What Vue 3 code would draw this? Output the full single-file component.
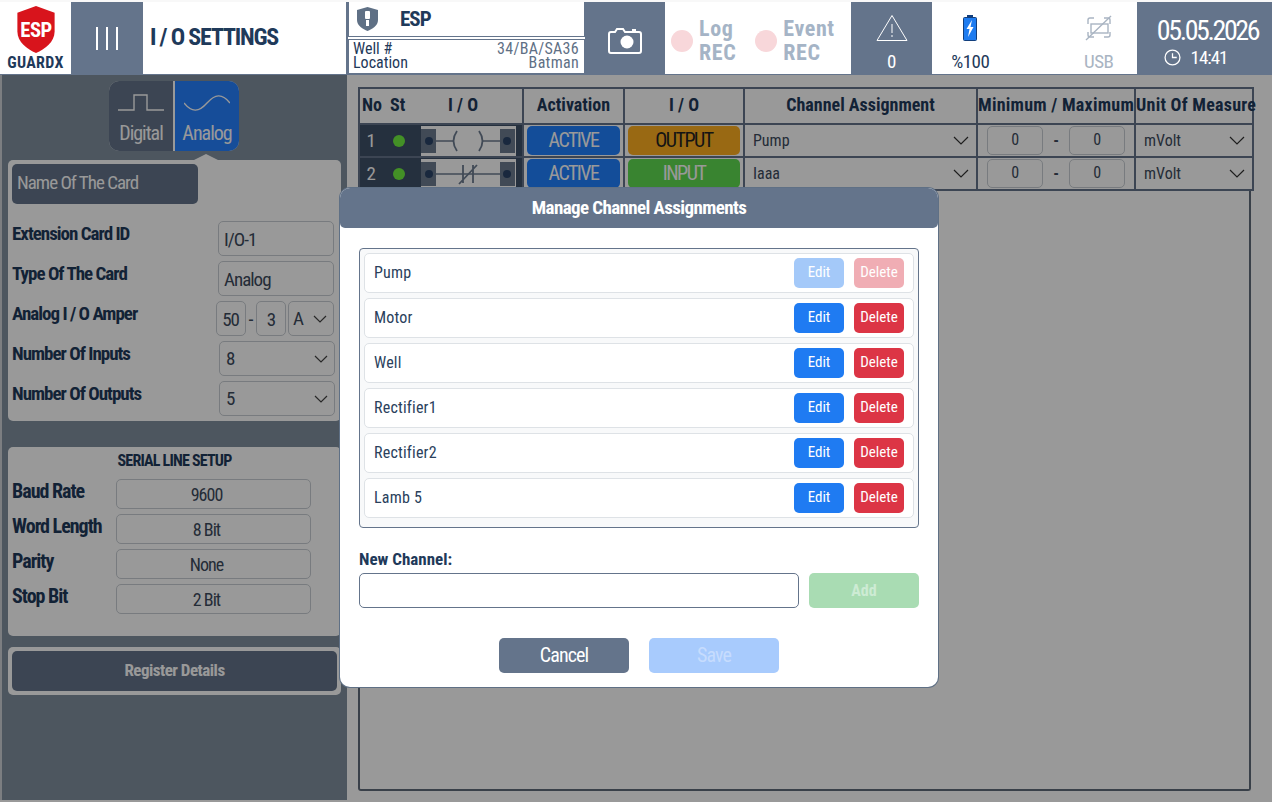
<script setup>
import { ref } from 'vue';

const channels = ref([
  { name: 'Pump', locked: true },
  { name: 'Motor', locked: false },
  { name: 'Well', locked: false },
  { name: 'Rectifier1', locked: false },
  { name: 'Rectifier2', locked: false },
  { name: 'Lamb 5', locked: false },
]);

const rows = [
  { no: 1, dir: 'OUTPUT', channel: 'Pump', coil: true },
  { no: 2, dir: 'INPUT', channel: 'Iaaa', coil: false },
];

const serial = [
  { label: 'Baud Rate', value: '9600' },
  { label: 'Word Length', value: '8 Bit' },
  { label: 'Parity', value: 'None' },
  { label: 'Stop Bit', value: '2 Bit' },
];
</script>

<template>
  <div class="page">
    <header class="top">
      <div class="brand">
        <div class="logo">
          <svg width="40" height="49" viewBox="0 0 40 50">
            <path d="M20 1 L39 8 V27 C39 38 29 45 20 49 C11 45 1 38 1 27 V8 Z" fill="#d8141c" />
            <text x="20" y="33" text-anchor="middle" class="logo-text">ESP</text>
          </svg>
          <span>GUARDX</span>
        </div>
        <div class="menu"><i></i><i></i><i></i></div>
        <h1>I / O SETTINGS</h1>
      </div>

      <div class="well">
        <div class="well-name">
          <svg width="23" height="26" viewBox="0 0 23 26">
            <path d="M11.5 1 L22 4 V14 C22 20 16 23 11.5 25 C7 23 1 20 1 14 V4 Z" fill="#5f7085" />
            <rect x="9" y="5" width="5" height="8" rx="1" fill="#fff" />
            <rect x="10" y="14" width="3" height="6" fill="#fff" />
          </svg>
          <b>ESP</b>
        </div>
        <div class="well-info">
          <div><span>Well #</span><span class="soft">34/BA/SA36</span></div>
          <div><span>Location</span><span class="soft">Batman</span></div>
        </div>
      </div>

      <div class="cam">
        <svg width="34" height="30" viewBox="0 0 34 30">
          <path d="M3 7 H7 L9 4 H15 L17 7 H25 V5 H27 V7 H31 Q33 7 33 9 V26 Q33 28 31 28 H3 Q1 28 1 26 V9 Q1 7 3 7 Z" fill="none" stroke="#fff" stroke-width="2" />
          <circle cx="19" cy="17" r="6.5" fill="#fff" />
        </svg>
      </div>

      <div class="rec">
        <div class="rec-item"><i></i><span>Log<br />REC</span></div>
        <div class="rec-item"><i></i><span>Event<br />REC</span></div>
      </div>

      <div class="warn">
        <svg width="32" height="28" viewBox="0 0 32 28">
          <path d="M16 1.5 L31 26.5 H1 Z" fill="none" stroke="#fff" stroke-width="1" />
          <path d="M16 10 V19 M16 21 V23" stroke="#fff" stroke-width="1" />
        </svg>
        <span>0</span>
      </div>

      <div class="status">
        <div class="stat">
          <svg width="16" height="28" viewBox="0 0 16 28">
            <rect x="5" y="1" width="6" height="3" fill="#123f7c" />
            <rect x="1.5" y="3.5" width="13" height="23" rx="1" fill="#1e7cf0" stroke="#123f7c" />
            <path d="M10 6 L4.5 15 H7.5 L6 23 L11.5 13 H8.5 Z" fill="#fff" />
          </svg>
          <span>%100</span>
        </div>
        <div class="stat off">
          <svg width="28" height="28" viewBox="0 0 28 28" fill="none" stroke="#a9b4c2" stroke-width="1.4">
            <path d="M3 10 V6 Q3 4 5 4 H9 M19 4 H23 Q25 4 25 6 V10 M3 18 V21 Q3 23 5 23 H9 M19 23 H23 Q25 23 25 21 V18" />
            <rect x="6" y="10" width="17" height="9" />
            <path d="M1 26 L26 2" />
          </svg>
          <span>USB</span>
        </div>
      </div>

      <div class="clock">
        <b>05.05.2026</b>
        <div>
          <svg width="17" height="17" viewBox="0 0 16 16" fill="none" stroke="#fff" stroke-width="1.2">
            <circle cx="8" cy="8" r="7" />
            <path d="M8 4 V8 H12" />
          </svg>
          <span>14:41</span>
        </div>
      </div>
    </header>

    <main class="body">
      <aside class="side">
        <div class="toggle">
          <div class="tab">
            <svg width="46" height="18" viewBox="0 0 46 18" fill="none" stroke="#fff" stroke-width="1.4">
              <path d="M0 16 H16 V1 H29 V16 H46" />
            </svg>
            <span>Digital</span>
          </div>
          <div class="tab on">
            <svg width="46" height="18" viewBox="0 0 46 18" fill="none" stroke="#fff" stroke-width="1.4">
              <path d="M0 9 C8 19 15 18 23 9 S38 -1 46 9" />
            </svg>
            <span>Analog</span>
          </div>
        </div>
        <div class="notch"></div>

        <section class="card first">
          <div class="card-name">Name Of The Card</div>
          <div class="field">
            <label>Extension Card ID</label>
            <div class="box wide gap-r">I/O-1</div>
          </div>
          <div class="field">
            <label>Type Of The Card</label>
            <div class="box wide gap-r">Analog</div>
          </div>
          <div class="field">
            <label>Analog I / O Amper</label>
            <div class="amper">
              <div class="box mid">50</div>
              <span>-</span>
              <div class="box mid">3</div>
              <div class="box sel small">A<svg width="14" height="8" viewBox="0 0 14 8"><path d="M1 1 L7 7 L13 1" fill="none" stroke="#444" stroke-width="1.2" /></svg></div>
            </div>
          </div>
          <div class="field">
            <label>Number Of Inputs</label>
            <div class="box sel wide">8<svg width="14" height="8" viewBox="0 0 14 8"><path d="M1 1 L7 7 L13 1" fill="none" stroke="#444" stroke-width="1.2" /></svg></div>
          </div>
          <div class="field">
            <label>Number Of Outputs</label>
            <div class="box sel wide">5<svg width="14" height="8" viewBox="0 0 14 8"><path d="M1 1 L7 7 L13 1" fill="none" stroke="#444" stroke-width="1.2" /></svg></div>
          </div>
        </section>

        <section class="card second">
          <h3>SERIAL LINE SETUP</h3>
          <div v-for="s in serial" :key="s.label" class="serial-row">
            <label>{{ s.label }}</label>
            <div class="box center">{{ s.value }}</div>
          </div>
        </section>

        <div class="reg-wrap"><button class="reg">Register Details</button></div>
      </aside>

      <section class="content">
        <div class="panel">
          <table class="grid">
            <colgroup>
              <col style="width: 164px" />
              <col style="width: 101px" />
              <col style="width: 120px" />
              <col style="width: 233px" />
              <col style="width: 158px" />
              <col style="width: 118px" />
            </colgroup>
            <thead>
              <tr>
                <th class="lead"><span class="n">No</span><span class="s">St</span><span class="io">I / O</span></th>
                <th>Activation</th>
                <th>I / O</th>
                <th>Channel Assignment</th>
                <th class="tight">Minimum / Maximum</th>
                <th class="tight">Unit Of Measure</th>
              </tr>
            </thead>
            <tbody>
              <tr v-for="r in rows" :key="r.no">
                <td class="lead-cell">
                  <div class="lead-row">
                    <span class="num">{{ r.no }}</span>
                    <span class="led"></span>
                    <div class="contact">
                      <svg width="94" height="30" viewBox="0 0 94 30">
                        <rect x="0" y="3" width="15" height="24" fill="#6d7c90" />
                        <rect x="79" y="3" width="15" height="24" fill="#6d7c90" />
                        <circle cx="8" cy="15" r="4" fill="#2a4468" />
                        <circle cx="86" cy="15" r="4" fill="#2a4468" />
                        <template v-if="r.coil">
                          <path d="M12 15 H32 M62 15 H82" stroke="#6d7c90" stroke-width="1.6" />
                          <path d="M36 5 Q29 15 36 25 M58 5 Q65 15 58 25" fill="none" stroke="#6d7c90" stroke-width="1.8" />
                        </template>
                        <template v-else>
                          <path d="M12 15 H82" stroke="#6d7c90" stroke-width="1.6" />
                          <path d="M42 6 V24 M52 6 V24 M38 25 L56 6" fill="none" stroke="#6d7c90" stroke-width="1.8" />
                        </template>
                      </svg>
                    </div>
                  </div>
                </td>
                <td><div class="pill blue">ACTIVE</div></td>
                <td><div class="pill" :class="r.dir === 'OUTPUT' ? 'amber' : 'green'">{{ r.dir }}</div></td>
                <td>
                  <div class="sel-cell">{{ r.channel }}<svg width="16" height="9" viewBox="0 0 16 9"><path d="M1 1 L8 8 L15 1" fill="none" stroke="#333" stroke-width="1.2" /></svg></div>
                </td>
                <td>
                  <div class="minmax"><div class="mm">0</div><span>-</span><div class="mm">0</div></div>
                </td>
                <td>
                  <div class="sel-cell">mVolt<svg width="16" height="9" viewBox="0 0 16 9"><path d="M1 1 L8 8 L15 1" fill="none" stroke="#333" stroke-width="1.2" /></svg></div>
                </td>
              </tr>
            </tbody>
          </table>
        </div>
      </section>

      <div class="overlay">
        <div class="modal">
          <div class="modal-head">Manage Channel Assignments</div>
          <div class="modal-body">
            <div class="list">
              <div v-for="c in channels" :key="c.name" class="item">
                <span>{{ c.name }}</span>
                <div class="item-btns" :class="{ locked: c.locked }">
                  <button class="btn edit">Edit</button>
                  <button class="btn del">Delete</button>
                </div>
              </div>
            </div>
            <label class="new-label">New Channel:</label>
            <div class="new-row">
              <input type="text" />
              <button class="add">Add</button>
            </div>
            <div class="foot">
              <button class="cancel">Cancel</button>
              <button class="save">Save</button>
            </div>
          </div>
        </div>
      </div>
    </main>
  </div>
</template>

<style>
html, body { margin: 0; padding: 0; }
</style>

<style scoped>
* { box-sizing: border-box; font-stretch: 75%; }

.page {
  width: 1272px;
  height: 802px;
  overflow: hidden;
  display: flex;
  flex-direction: column;
  font-family: "Roboto", "Open Sans", sans-serif;
  letter-spacing: -0.5px;
  color: #1f3a5a;
  background: #fff;
}

/* barre du haut */
.top {
  height: 75px;
  flex: none;
  display: flex;
  gap: 2px;
  background: #64748b;
  border-top: 2px solid #f8f8f8;
  border-bottom: 1px solid #64748b;
}
.brand {
  width: 346px;
  background: #fff;
  display: flex;
  align-items: stretch;
}
.logo {
  width: 71px;
  display: flex;
  flex-direction: column;
  align-items: center;
  padding-top: 3px;
}
.logo span {
  font-size: 16px;
  font-weight: 700;
  line-height: 18px;
  letter-spacing: 0.3px;
}
.logo-text { font-size: 21px; font-weight: 700; fill: #fff; }
.menu {
  width: 72px;
  background: #64748b;
  display: flex;
  justify-content: center;
  align-items: center;
  gap: 8px;
}
.menu i { width: 2px; height: 23px; background: #fff; }
h1 {
  margin: 0 0 2px 7px;
  align-self: center;
  font-size: 24px;
  font-weight: 700;
  letter-spacing: -1.2px;
}
.well {
  width: 237px;
  display: flex;
  flex-direction: column;
  gap: 2px;
  background: #fff;
}
.well-name {
  height: 35px;
  border: 1px solid #64748b;
  border-top: none;
  display: flex;
  align-items: center;
  gap: 21px;
  padding-left: 7px;
}
.well-name b { font-size: 21px; letter-spacing: -1px; }
.well-info {
  height: 35px;
  border: 1px solid #64748b;
  padding: 2px 5px 0 4px;
  font-size: 16px;
  line-height: 14px;
  letter-spacing: 0;
}
.well-info div { display: flex; justify-content: space-between; }
.soft { color: #5f7085; letter-spacing: 0.3px; }
.cam {
  width: 76px;
  display: flex;
  align-items: center;
  justify-content: center;
  padding-top: 4px;
}
.rec {
  width: 186px;
  background: #fff;
  display: flex;
  padding: 5px 0 0 6px;
  gap: 19px;
  align-items: center;
}
.rec-item { display: flex; align-items: center; gap: 6px; }
.rec-item i { width: 22px; height: 22px; border-radius: 50%; background: #f8d7da; }
.rec-item span {
  color: #a5b4c6;
  font-size: 22px;
  font-weight: 700;
  line-height: 24px;
  letter-spacing: 0.6px;
}
.warn {
  width: 77px;
  color: #fff;
  display: flex;
  flex-direction: column;
  align-items: center;
  padding-top: 12px;
  gap: 10px;
  font-size: 19px;
  line-height: 20px;
}
.status {
  width: 205px;
  background: #fff;
  display: flex;
}
.stat {
  flex: 1;
  display: flex;
  flex-direction: column;
  align-items: center;
  padding-top: 12px;
  gap: 9px;
  font-size: 19px;
  line-height: 21px;
  padding-right: 22px;
}
.stat.off { color: #a9b4c2; padding-right: 0; padding-left: 30px; }
.clock {
  flex: 1;
  color: #fff;
  margin-left: -2px;
  text-align: center;
  padding: 13px 0 0 6px;
}
.clock b { display: block; font-size: 28px; font-weight: 400; line-height: 32px; letter-spacing: -2.4px; }
.clock div { display: flex; align-items: center; justify-content: center; gap: 10px; font-size: 19px; padding-right: 24px; letter-spacing: -1px; margin-top: -1px; }

/* corps */
.body {
  position: relative;
  flex: 1;
  display: flex;
  background: #fff;
}
.side {
  width: 347px;
  flex: none;
  background: #80909f;
  border-left: 2px solid #cfd3d8;
  padding: 6px 6px 0 6px;
  margin-bottom: 2px;
  display: flex;
  flex-direction: column;
  align-items: stretch;
}
.toggle {
  align-self: center;
  margin-left: -1px;
  height: 70px;
  width: 130px;
  display: flex;
  gap: 2px;
  background: #fff;
  border-radius: 10px;
  overflow: hidden;
}
.tab {
  flex: 1;
  background: #64748b;
  color: #fff;
  display: flex;
  flex-direction: column;
  align-items: center;
  padding-top: 13px;
  gap: 9px;
  font-size: 20px;
  line-height: 24px;
  letter-spacing: -1px;
}
.tab.on { background: #2680ff; }
.notch {
  align-self: center;
  margin: 3px 0 0 62px;
  border-left: 12px solid transparent;
  border-right: 12px solid transparent;
  border-bottom: 6px solid #fff;
}
.card {
  background: #fff;
  border-radius: 5px;
  padding: 0 6px;
}
.card.first {
  height: 261px;
  padding-top: 4px;
}
.card-name {
  width: 186px;
  height: 40px;
  background: #64748b;
  color: #fff;
  font-size: 19px;
  line-height: 38px;
  padding-left: 5px;
  border-radius: 5px;
  margin: 0 0 17px -2px;
  letter-spacing: -1px;
}
.field {
  height: 40px;
  display: flex;
  align-items: flex-start;
  justify-content: space-between;
  margin-left: -2px;
}
label { font-weight: 700; font-size: 19px; line-height: 24px; color: #1f3a5a; white-space: nowrap; letter-spacing: -1px; }
.field label { margin-top: 1px; }
.box {
  height: 35px;
  border: 1px solid #c9ced4;
  border-radius: 5px;
  color: #3c4a5c;
  font-size: 19px;
  line-height: 35px;
  padding-left: 5px;
  letter-spacing: -1px;
}
.wide { width: 116px; }
.gap-r { margin-right: 1px; }
.sel {
  display: flex;
  align-items: center;
  justify-content: space-between;
  padding-right: 6px;
  padding-left: 6px;
}
.amper { display: flex; gap: 2px; align-items: center; margin-right: 1px; }
.amper span { font-size: 20px; color: #3c4a5c; padding: 0 1px; }
.mid { width: 30px; padding: 0; text-align: center; }
.small { width: 46px; padding-left: 4px; }
.card.second {
  margin-top: 26px;
  height: 189px;
  padding-top: 3px;
}
h3 {
  margin: 0 0 8px;
  font-size: 16px;
  line-height: 21px;
  text-align: center;
  letter-spacing: -0.8px;
}
.serial-row {
  height: 35px;
  display: flex;
  margin-left: -2px;
}
.serial-row label { width: 104px; line-height: 24px; font-size: 20px; flex: none; }
.serial-row .box {
  width: 195px;
  height: 30px;
  line-height: 29px;
  text-align: center;
  font-size: 18px;
  padding: 0 14px 0 0;
}
.reg-wrap {
  margin-top: 11px;
  height: 48px;
  background: #fff;
  border-radius: 5px;
  padding: 4px;
}
.reg {
  width: 100%;
  height: 40px;
  border: none;
  border-radius: 5px;
  background: #64748b;
  color: #fff;
  font-family: inherit;
  font-size: 17px;
  font-weight: 700;
  letter-spacing: -0.5px;
  padding-bottom: 3px;
}
.content {
  flex: 1;
  min-width: 0;
  padding: 12px 21px 11px 11px;
}
.panel {
  height: 100%;
  border: 2px solid #5f6b7a;
  border-top: none;
  border-radius: 0 0 3px 3px;
}
.grid {
  position: relative;
  width: 894px;
  table-layout: fixed;
  border-collapse: collapse;
  border: 2px solid #64748b;
  margin-left: -2px;
  background: #fff;
}
th, td { border: 2px solid #64748b; padding: 0; background: #fff; }
th {
  height: 36px;
  font-size: 18px;
  letter-spacing: 0;
  color: #1f3a5a;
  font-weight: 700;
  white-space: nowrap;
  padding-bottom: 3px;
}
th.tight { letter-spacing: 0.25px; font-size: 18px; }
th.lead { text-align: left; }
th.lead span { display: inline-block; }
.n { width: 30px; padding-left: 2px; }
.s { width: 27px; }
.io { width: 92px; text-align: center; }
td { height: 33px; }
.lead-row {
  height: 31px;
  display: flex;
  align-items: center;
  background: #3f5068;
  color: #fff;
}
.num { width: 22px; text-align: center; font-size: 19px; }
.led {
  width: 12px;
  height: 12px;
  margin: 0 16px 0 11px;
  border-radius: 50%;
  background: #70f040;
}
.contact { width: 95px; height: 30px; background: #fff; line-height: 0; }
.pill {
  height: 29px;
  margin: 1px 3px;
  border-radius: 5px;
  color: #fff;
  text-align: center;
  font-size: 20px;
  line-height: 29px;
  letter-spacing: -1.5px;
}
.blue { background: #2080ff; }
.amber { background: #ffb020; color: #222; }
.green { background: #60dc50; }
.sel-cell {
  display: flex;
  justify-content: space-between;
  align-items: center;
  padding: 0 7px 0 8px;
  font-size: 16px;
  letter-spacing: 0;
  color: #3c4a5c;
}
.minmax { display: flex; align-items: center; justify-content: center; gap: 6px; }
.minmax span { width: 14px; text-align: center; font-weight: 700; color: #3c4a5c; }
.mm {
  width: 56px;
  height: 29px;
  border: 1px solid #c9ced4;
  border-radius: 5px;
  text-align: center;
  line-height: 25px;
  font-size: 16px;
  color: #3c4a5c;
}

/* fenetre modale */
.overlay {
  position: absolute;
  inset: 0;
  background: rgba(0, 0, 0, 0.4);
  display: flex;
  align-items: flex-start;
  justify-content: center;
  padding: 113px 0 0 6px;
}
.modal {
  width: 598px;
  height: 499px;
  background: #fff;
  border-radius: 10px;
  box-shadow: 0 0 0 1px #5f7085;
}
.modal-head {
  height: 40px;
  background: #64748b;
  color: #fff;
  border-radius: 10px 10px 5px 5px;
  text-align: center;
  font-size: 19px;
  font-weight: 700;
  line-height: 39px;
  letter-spacing: -0.6px;
}
.modal-body { padding: 20px 19px 0; }
.list {
  height: 280px;
  border: 1px solid #64748b;
  border-radius: 4px;
  background: #f8f9fa;
  padding: 4px;
  display: flex;
  flex-direction: column;
  gap: 5px;
}
.item {
  height: 40px;
  flex: none;
  background: #fff;
  border: 1px solid #dee2e6;
  border-radius: 5px;
  display: flex;
  align-items: center;
  justify-content: space-between;
  padding: 0 9px;
  font-size: 16px;
  letter-spacing: 0.2px;
  color: #2a415c;
}
.item > span { margin-top: -2px; }
.item-btns { display: flex; gap: 10px; }
.btn {
  width: 50px;
  height: 30px;
  border: none;
  border-radius: 5px;
  color: #fff;
  font-family: inherit;
  font-size: 15px;
  letter-spacing: 0;
  padding: 0 0 2px;
}
.edit { background: #1f7bf2; }
.del { background: #dc3545; }
.locked .btn { opacity: 0.4; }
.new-label { display: block; margin-top: 20px; font-size: 17px; line-height: 22px; letter-spacing: 0; }
.new-row { display: flex; gap: 10px; margin-top: 3px; height: 35px; }
.new-row input {
  flex: 1;
  border: 1px solid #64748b;
  border-radius: 5px;
  background: #fff;
}
.add {
  width: 110px;
  border: none;
  border-radius: 5px;
  background: #a9dcb3;
  color: #cdebd4;
  font-family: inherit;
  font-size: 16px;
  font-weight: 700;
}
.foot { display: flex; justify-content: center; gap: 20px; margin-top: 30px; }
.foot button {
  width: 130px;
  height: 35px;
  border: none;
  border-radius: 5px;
  color: #fff;
  font-family: inherit;
  font-size: 20px;
  letter-spacing: -0.9px;
  padding: 0 0 2px;
}
.cancel { background: #64748b; }
.save { background: #a8cbfd; color: #c6dcfd !important; }
</style>
